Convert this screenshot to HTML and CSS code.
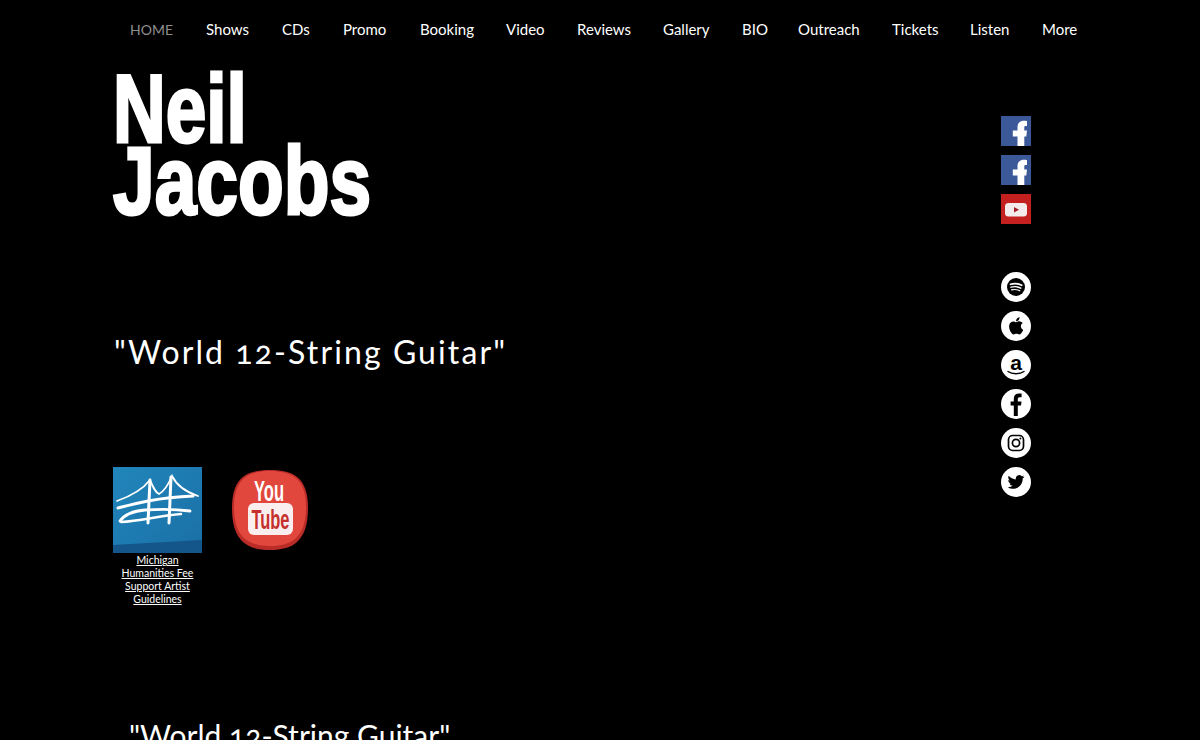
FILE: index.html
```html
<!DOCTYPE html>
<html lang="en">
<head>
    <meta charset="UTF-8">
    <title>Neil Jacobs</title>
    <link rel="stylesheet" href="styles.css">
</head>
<body>
<nav class="top-nav">
    <a class="current" href="#">HOME</a>
    <a href="#">Shows</a>
    <a href="#">CDs</a>
    <a href="#">Promo</a>
    <a href="#">Booking</a>
    <a href="#">Video</a>
    <a href="#">Reviews</a>
    <a href="#">Gallery</a>
    <a href="#">BIO</a>
    <a href="#">Outreach</a>
    <a href="#">Tickets</a>
    <a href="#">Listen</a>
    <a href="#">More</a>
</nav>
<div class="page">
    <div class="content">
        <h1 class="name"><span>Neil</span><span class="last">Jacobs</span></h1>
        <h2 class="tagline">"World 12-String Guitar"</h2>
        <div class="promo">
            <a class="promo-item" href="#">
                <svg class="mh-logo" viewBox="0 0 89 86">
                    <defs>
                        <linearGradient id="mhblue" x1="0" y1="0" x2="1" y2="1">
                            <stop offset="0" stop-color="#2186bb"/>
                            <stop offset="1" stop-color="#1a6fa6"/>
                        </linearGradient>
                    </defs>
                    <rect width="89" height="86" fill="url(#mhblue)"/>
                    <path d="M0 78L89 73V86H0Z" fill="#14558a"/>
                    <g fill="none" stroke="#fff" stroke-linecap="round">
                        <path d="M4 34C18 29 30 22 37 13C40 20 42 25 46 27C52 24 56 16 59 9C64 19 73 25 85 29" stroke-width="1.800"/>
                        <path d="M5 41C24 36 42 31 80 29" stroke-width="3"/>
                        <path d="M7 54C12 47 20 44 32 43C48 42 62 42 77 44" stroke-width="2.800"/>
                        <path d="M8 55C28 54 44 49 68 47" stroke-width="2.400"/>
                        <path d="M37 13L35 56" stroke-width="3"/>
                        <path d="M58 10L56 56" stroke-width="3"/>
                    </g>
                </svg>
                <span class="promo-text">Michigan<br>Humanities Fee<br>Support Artist<br>Guidelines</span>
            </a>
            <a href="#">
                <svg class="yt-logo" viewBox="0 0 76 80">
                    <path d="M38 0C62 0 76 8 76 38C76 70 62 80 38 80C14 80 0 70 0 38C0 8 14 0 38 0Z" fill="#b92c27"/>
                    <path d="M38 1C60 1 74 9 74 37C74 67 60 76 38 76C16 76 2 67 2 37C2 9 16 1 38 1Z" fill="#e2473d"/>
                    <text class="yt-you" x="37" y="31" text-anchor="middle" textLength="30" lengthAdjust="spacingAndGlyphs">You</text>
                    <rect x="16" y="33" width="45" height="32" rx="6" fill="#fbeeee"/>
                    <text class="yt-tube" x="38.500" y="59" text-anchor="middle" textLength="38" lengthAdjust="spacingAndGlyphs">Tube</text>
                </svg>
            </a>
        </div>
        <h2 class="tagline-two">"World 12-String Guitar"</h2>
    </div>
    <aside class="social">
        <div class="social-group">
            <a class="square fb" href="#">
                <svg viewBox="0 0 30 30"><path d="M16.500 30V20.500H11.800V14.500H16.500V11.200C16.500 7 19 4.800 22.800 4.800C24.300 4.800 25.500 4.900 26 5V10H24.600C23.600 10 23.300 10.500 23.300 11.500V14.500H26L25.300 20.500H23.300V30Z" fill="#fff"/></svg>
            </a>
            <a class="square fb" href="#">
                <svg viewBox="0 0 30 30"><path d="M16.500 30V20.500H11.800V14.500H16.500V11.200C16.500 7 19 4.800 22.800 4.800C24.300 4.800 25.500 4.900 26 5V10H24.600C23.600 10 23.300 10.500 23.300 11.500V14.500H26L25.300 20.500H23.300V30Z" fill="#fff"/></svg>
            </a>
            <a class="square yt" href="#">
                <svg viewBox="0 0 30 30"><rect x="4" y="9" width="22" height="13.500" rx="3.500" fill="#f4ecec"/><path d="M13 13L18 15.700L13 18.500Z" fill="#a3202a"/></svg>
            </a>
        </div>
        <div class="social-group">
            <a class="round" href="#">
                <svg viewBox="0 0 30 30">
                    <circle cx="15" cy="15" r="9" fill="#000"/>
                    <g fill="none" stroke="#fff" stroke-linecap="round">
                        <path d="M9.500 12.300C13 11.300 17.500 11.500 20.700 13.300" stroke-width="1.700"/>
                        <path d="M10 15.200C13.200 14.300 17 14.600 19.800 16.200" stroke-width="1.400"/>
                        <path d="M10.500 17.900C13.200 17.200 16.300 17.400 18.800 18.800" stroke-width="1.100"/>
                    </g>
                </svg>
            </a>
            <a class="round" href="#">
                <svg viewBox="0 0 30 30">
                    <path transform="translate(6.500 6.200) scale(.72)" d="M12.152 6.896c-.948 0-2.415-1.078-3.960-1.040-2.040.027-3.910 1.183-4.961 3.014-2.117 3.675-.546 9.103 1.519 12.090 1.013 1.454 2.208 3.090 3.792 3.039 1.520-.065 2.090-.987 3.935-.987 1.831 0 2.350.987 3.960.948 1.637-.026 2.676-1.480 3.676-2.948 1.156-1.688 1.636-3.325 1.662-3.415-.039-.013-3.182-1.221-3.220-4.857-.026-3.040 2.480-4.494 2.597-4.559-1.429-2.090-3.623-2.324-4.390-2.376-2-.156-3.675 1.090-4.610 1.090zM15.530 3.830c.843-1.012 1.400-2.427 1.245-3.830-1.207.052-2.662.805-3.532 1.818-.780.896-1.454 2.338-1.273 3.714 1.338.104 2.715-.688 3.559-1.701"/>
                </svg>
            </a>
            <a class="round" href="#">
                <svg viewBox="0 0 30 30">
                    <text class="amazon-a" x="15" y="20" text-anchor="middle">a</text>
                    <path d="M7 21.500C11 24.500 19 24.500 23 21.500" fill="none" stroke="#000" stroke-width="1.300" stroke-linecap="round"/>
                </svg>
            </a>
            <a class="round" href="#">
                <svg viewBox="0 0 30 30"><path d="M16.800 27V16.500H20L20.500 12.500H16.800V10.200C16.800 9 17.200 8.200 18.800 8.200H20.600V4.600C20.200 4.500 19.100 4.400 17.800 4.400C15 4.400 12.800 6.200 12.800 9.700V12.500H9.600V16.500H12.800V27Z"/></svg>
            </a>
            <a class="round" href="#">
                <svg viewBox="0 0 30 30">
                    <rect x="7.500" y="7.500" width="15" height="15" rx="4.200" fill="none" stroke="#000" stroke-width="1.700"/>
                    <circle cx="15" cy="15" r="3.600" fill="none" stroke="#000" stroke-width="1.700"/>
                    <circle cx="19.400" cy="10.600" r="1"/>
                </svg>
            </a>
            <a class="round" href="#">
                <svg viewBox="0 0 30 30">
                    <path transform="translate(6.600 6.600) scale(.7)" d="M23.953 4.570a10 10 0 01-2.825.775 4.958 4.958 0 002.163-2.723c-.951.555-2.005.959-3.127 1.184a4.920 4.920 0 00-8.384 4.482C7.690 8.095 4.067 6.130 1.640 3.162a4.822 4.822 0 00-.666 2.475c0 1.710.870 3.213 2.188 4.096a4.904 4.904 0 01-2.228-.616v.060a4.923 4.923 0 003.946 4.827 4.996 4.996 0 01-2.212.085 4.936 4.936 0 004.604 3.417 9.867 9.867 0 01-6.102 2.105c-.390 0-.779-.023-1.170-.067a13.995 13.995 0 007.557 2.209c9.053 0 13.998-7.496 13.998-13.985 0-.210 0-.420-.015-.630A9.935 9.935 0 0024 4.590z"/>
                </svg>
            </a>
        </div>
    </aside>
</div>
</body>
</html>
```

FILE: styles.css
```css
* {
    margin: 0;
    padding: 0;
    box-sizing: border-box;
}
html, body {
    height: 740px;
    overflow: hidden;
}
body {
    background: #000;
    color: #fff;
    font-family: Lato, "Liberation Sans", sans-serif;
}
a {
    color: #fff;
    text-decoration: none;
}
.top-nav {
    display: grid;
    grid-template-columns: 76px 76px 61px 77px 86px 71px 86px 79px 56px 94px 78px 72px auto;
    align-items: center;
    height: 58px;
    padding-left: 130px;
    font-size: 15px;
}
.top-nav .current {
    color: #8f8f8f;
    font-size: 14px;
}
.page {
    display: flex;
}
.content {
    width: 1001px;
    padding-left: 113px;
}
.name {
    display: flex;
    flex-direction: column;
    padding-top: 15px;
    font-family: "Liberation Sans", sans-serif;
    font-size: 96px;
    font-weight: 700;
    line-height: 72px;
    -webkit-text-stroke: 3px #fff;
}
.name span {
    transform: scaleX(.76);
    transform-origin: left;
    white-space: nowrap;
}
.name .last {
    transform: scaleX(.78);
}
.tagline {
    margin-top: 115px;
    padding-left: 1px;
    font-size: 32px;
    font-weight: 400;
    line-height: 40px;
    letter-spacing: 2.100px;
    font-variant-numeric: oldstyle-nums;
}
.promo {
    display: flex;
    gap: 30px;
    margin-top: 95px;
}
.promo-item {
    display: flex;
    flex-direction: column;
    width: 89px;
}
.mh-logo {
    display: block;
    width: 89px;
    height: 86px;
}
.promo-text {
    margin-top: 1px;
    font-size: 10.500px;
    line-height: 13px;
    text-align: center;
    text-decoration: underline;
    white-space: nowrap;
}
.yt-logo {
    display: block;
    width: 76px;
    height: 80px;
    margin-top: 3px;
}
.yt-you, .yt-tube {
    font-family: "Liberation Sans", sans-serif;
    font-weight: 700;
}
.yt-you {
    font-size: 29px;
    fill: #fff;
}
.yt-tube {
    font-size: 27px;
    fill: #c5302c;
}
.tagline-two {
    margin-top: 109px;
    padding-left: 16px;
    font-size: 30px;
    font-weight: 400;
    line-height: 40px;
    font-variant-numeric: oldstyle-nums;
}
.social {
    display: flex;
    flex-direction: column;
    gap: 48px;
    padding-top: 58px;
}
.social-group {
    display: flex;
    flex-direction: column;
    gap: 9px;
}
.social a {
    display: block;
    width: 30px;
    height: 30px;
}
.social svg {
    display: block;
    width: 30px;
    height: 30px;
}
.square.fb {
    background: #3b5998;
}
.square.yt {
    background: #c4201f;
}
.round {
    background: #fff;
    border-radius: 50%;
}
.amazon-a {
    font-family: "Liberation Sans", sans-serif;
    font-size: 21px;
    font-weight: 700;
}
```
